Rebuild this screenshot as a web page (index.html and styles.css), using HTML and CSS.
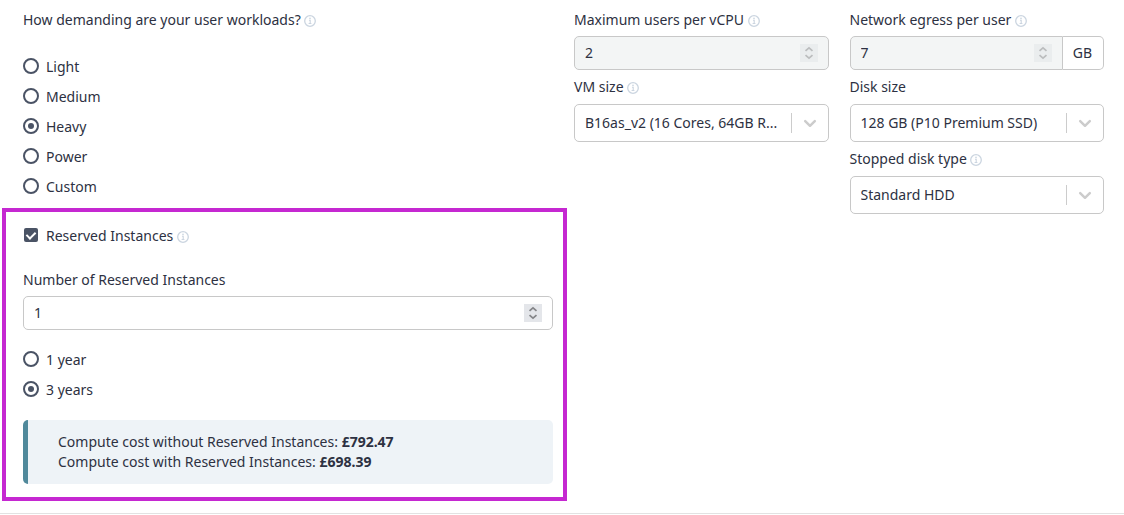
FILE: index.html
```html
<!DOCTYPE html>
<html lang="en">
<head>
    <meta charset="UTF-8">
    <meta name="viewport" content="width=device-width, initial-scale=1.0">
    <title>User workloads</title>

    <link rel="stylesheet" href="styles.css">
</head>

<body>
    <svg class="sprite" aria-hidden="true">
        <symbol id="info" viewBox="0 0 12 12">
            <circle cx="6" cy="6" r="5.3" fill="none" stroke="currentColor" stroke-width="1.3" />
            <path d="M5 5.2h1.2v3M4.6 8.5h2.8" fill="none" stroke="currentColor" stroke-width="1.1" />
            <circle cx="6" cy="3.4" r="0.8" fill="currentColor" />
        </symbol>
        <symbol id="chevron" viewBox="0 0 20 20">
            <path d="M5.2 8.2l4.8 4.6 4.8-4.6" fill="none" stroke="currentColor" stroke-width="2.5" stroke-linecap="round" stroke-linejoin="round" />
        </symbol>
        <symbol id="spin" viewBox="0 0 18 18">
            <path d="M5.5 6.9L9 3.8l3.5 3.1M5.5 11.1L9 14.2l3.5-3.1" fill="none" stroke="currentColor" stroke-width="1.7" />
        </symbol>
    </svg>

    <form class="calculator">
        <div class="workload">
            <div class="label" id="workload_label">How demanding are your user workloads? <svg class="info"><use href="#info" /></svg></div>
            <div class="options" role="radiogroup" aria-labelledby="workload_label">
                <label class="option"><input type="radio" name="workload" value="light">Light</label>
                <label class="option"><input type="radio" name="workload" value="medium">Medium</label>
                <label class="option"><input type="radio" name="workload" value="heavy" checked>Heavy</label>
                <label class="option"><input type="radio" name="workload" value="power">Power</label>
                <label class="option"><input type="radio" name="workload" value="custom">Custom</label>
            </div>

            <div class="reserved">
                <label class="option"><input type="checkbox" name="reserved" checked>Reserved Instances <svg class="info"><use href="#info" /></svg></label>
                <div class="field count">
                    <label class="label" for="instances">Number of Reserved Instances</label>
                    <div class="control">
                        <input class="number" type="number" id="instances" value="1">
                        <svg class="spin"><use href="#spin" /></svg>
                    </div>
                </div>
                <div class="term">
                    <label class="option"><input type="radio" name="term" value="1">1 year</label>
                    <label class="option"><input type="radio" name="term" value="3" checked>3 years</label>
                </div>
                <div class="cost">
                    <div>Compute cost without Reserved Instances: <b>£792.47</b></div>
                    <div>Compute cost with Reserved Instances: <b>£698.39</b></div>
                </div>
            </div>
        </div>

        <div class="settings">
            <div class="column">
                <div class="field">
                    <label class="label" for="max_users">Maximum users per vCPU <svg class="info"><use href="#info" /></svg></label>
                    <div class="control">
                        <input class="number" type="number" id="max_users" value="2" disabled>
                        <svg class="spin"><use href="#spin" /></svg>
                    </div>
                </div>
                <div class="field field_select">
                    <label class="label" for="vm_size">VM size <svg class="info"><use href="#info" /></svg></label>
                    <div class="control">
                        <select class="select" id="vm_size">
                            <option>B16as_v2 (16 Cores, 64GB R...</option>
                        </select>
                        <span class="arrow"><svg><use href="#chevron" /></svg></span>
                    </div>
                </div>
            </div>

            <div class="column">
                <div class="field">
                    <label class="label" for="egress">Network egress per user <svg class="info"><use href="#info" /></svg></label>
                    <div class="group">
                        <div class="control">
                            <input class="number" type="number" id="egress" value="7" disabled>
                            <svg class="spin"><use href="#spin" /></svg>
                        </div>
                        <span class="unit">GB</span>
                    </div>
                </div>
                <div class="field field_select">
                    <label class="label" for="disk_size">Disk size</label>
                    <div class="control">
                        <select class="select" id="disk_size">
                            <option>128 GB (P10 Premium SSD)</option>
                        </select>
                        <span class="arrow"><svg><use href="#chevron" /></svg></span>
                    </div>
                </div>
                <div class="field field_select">
                    <label class="label" for="disk_type">Stopped disk type <svg class="info"><use href="#info" /></svg></label>
                    <div class="control">
                        <select class="select" id="disk_type">
                            <option>Standard HDD</option>
                        </select>
                        <span class="arrow"><svg><use href="#chevron" /></svg></span>
                    </div>
                </div>
            </div>
        </div>
    </form>
</body>
</html>
```
FILE: styles.css
```css
* {
    box-sizing: border-box;
}

body {
    margin: 0;
    background-color: #fff;
    color: #2d3142;
    font: 14px/20px "Noto Sans", sans-serif;
}

.sprite {
    display: none;
}

.calculator {
    display: grid;
    grid-template-columns: 1fr 1fr;
    gap: 21px;
    padding: 10px 20px 12px 23px;
    border-bottom: 1px solid #e2e2e2;
}

.settings {
    display: grid;
    grid-template-columns: 1fr 1fr;
    gap: 21px;
    align-items: start;
}

.column {
    display: flex;
    flex-direction: column;
    gap: 7px;
}

.column,
.workload {
    min-width: 0;
}

.field {
    display: flex;
    flex-direction: column;
    gap: 6px;
}

.field_select {
    gap: 7px;
}

.info {
    width: 12px;
    height: 12px;
    vertical-align: -2px;
    color: #cbd5e0;
}

.options {
    margin: 22px 0 6px;
}

.option {
    display: flex;
    align-items: center;
    height: 30px;
}

.option .info {
    margin: 2px 0 0 4px;
}

.option input {
    appearance: none;
    display: flex;
    align-items: center;
    justify-content: center;
    flex: none;
    width: 16px;
    height: 16px;
    margin: 0 7px 2px 0;
    border: 2px solid #4a5365;
    border-radius: 50%;
}

.option input[type="radio"]:checked::before {
    content: "";
    width: 6px;
    height: 6px;
    border-radius: 50%;
    background-color: #4a5365;
}

.option input[type="checkbox"] {
    width: 14px;
    height: 14px;
    margin: 0 8px 2px 1px;
    border: none;
    border-radius: 2px;
    background-color: #4a5365;
}

.option input[type="checkbox"]:checked::before {
    content: "";
    width: 4px;
    height: 7px;
    margin-bottom: 2px;
    border: solid #fff;
    border-width: 0 2px 2px 0;
    transform: rotate(45deg);
}

.reserved {
    margin: 0 -14px 0 -21px;
    padding: 9px 10px 13px 17px;
    border: 4px solid #c528d1;
}

.count {
    margin: 19px 0 15px;
}

.control {
    position: relative;
    flex: 1;
    min-width: 0;
}

.number,
.select {
    appearance: none;
    display: block;
    width: 100%;
    border: 1px solid #c8c8c8;
    border-radius: 5px;
    background-color: #fff;
    color: inherit;
    font: inherit;
    opacity: 1;
}

.number {
    appearance: textfield;
    height: 34px;
    padding: 0 40px 2px 10px;
}

.number::-webkit-inner-spin-button {
    display: none;
}

.number:disabled {
    background-color: #f3f5f5;
}

.select {
    height: 38px;
    padding: 0 40px 0 10px;
}

.spin {
    position: absolute;
    top: 8px;
    right: 11px;
    width: 18px;
    height: 18px;
    background-color: #e4e6ea;
    color: #848588;
    pointer-events: none;
}

.number:disabled + .spin {
    background-color: #eaedee;
    color: #bbbdbe;
}

.arrow {
    position: absolute;
    top: 9px;
    right: 0;
    display: flex;
    align-items: center;
    width: 38px;
    height: 20px;
    padding-left: 8px;
    border-left: 1px solid #ccc;
    color: #ccc;
    pointer-events: none;
}

.arrow svg {
    width: 20px;
    height: 20px;
}

.group {
    display: flex;
}

.group .number {
    border-radius: 5px 0 0 5px;
}

.unit {
    padding: 6px 11px 6px 10px;
    border: 1px solid #c8c8c8;
    border-left: none;
    border-radius: 0 5px 5px 0;
}

.cost {
    margin-top: 15px;
    padding: 12px 30px;
    border-left: 5px solid #50899b;
    border-radius: 5px;
    background-color: #eef3f7;
}
```
